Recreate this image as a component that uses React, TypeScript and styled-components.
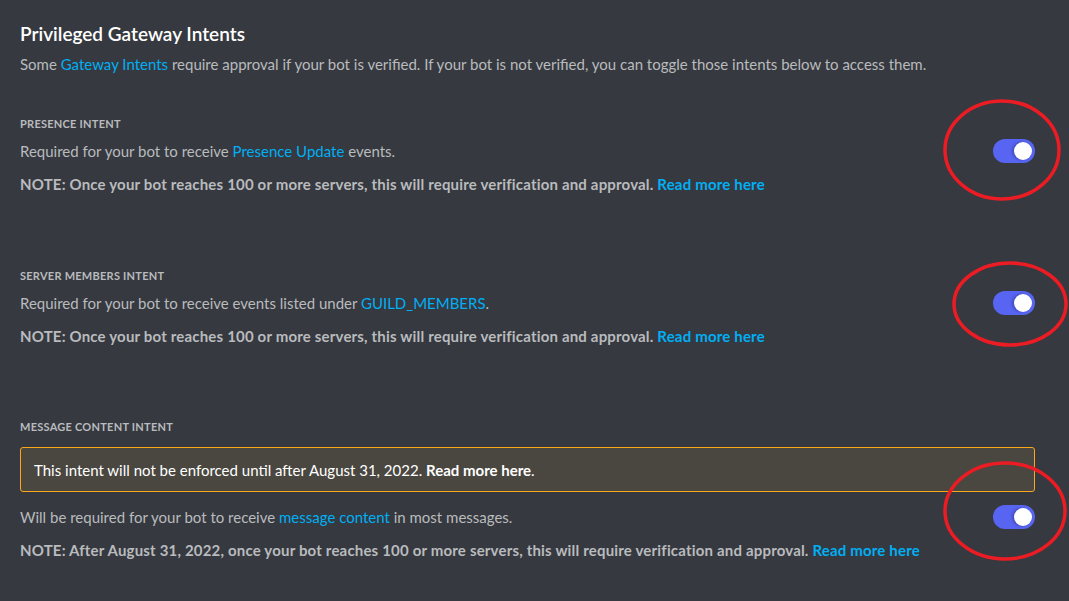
import React from 'react'
import styled, { createGlobalStyle } from 'styled-components'

const GlobalStyle = createGlobalStyle`
    html, body {
        margin: 0;
        padding: 0;
        background: #36393f;
    }
    body {
        font-family: Lato, "Noto Sans", sans-serif;
        -webkit-font-smoothing: antialiased;
    }
`

const Page = styled.div`
    position: relative;
    width: 1069px;
    height: 601px;
    box-sizing: border-box;
    padding: 22px 34px 0 20px;
    background: #36393f;
    overflow: hidden;
`

const Title = styled.div`
    font-size: 19px;
    line-height: 24px;
    font-weight: 600;
    color: #ffffff;
`

const Subtitle = styled.div`
    margin-top: 8px;
    font-size: 15px;
    line-height: 20px;
    color: #b9bbbe;
`

const Link = styled.a`
    color: #00aff4;
    text-decoration: none;
`

const Section = styled.div<{ $top: number }>`
    display: flex;
    flex-direction: column;
    margin-top: ${(p) => p.$top}px;
`

const SectionHeader = styled.div`
    font-size: 11px;
    line-height: 16px;
    font-weight: 700;
    letter-spacing: 0.25px;
    text-transform: uppercase;
    color: #b9bbbe;
`

const Row = styled.div<{ $top: number }>`
    display: flex;
    align-items: center;
    justify-content: space-between;
    height: 24px;
    margin-top: ${(p) => p.$top}px;
`

const Description = styled.div`
    font-size: 15px;
    line-height: 20px;
    color: #b9bbbe;
`

const Note = styled.div`
    margin-top: 11px;
    font-size: 15px;
    line-height: 20px;
    font-weight: 700;
    letter-spacing: 0.18px;
    color: #b9bbbe;
`

const Alert = styled.div`
    margin-top: 12px;
    height: 45px;
    box-sizing: border-box;
    display: flex;
    align-items: center;
    padding: 0 13px;
    border: 1px solid #faa81a;
    border-radius: 3px;
    background: #4a4740;
    font-size: 15px;
    color: #ffffff;

    b {
        font-weight: 700;
    }
`

const Switch = styled.div`
    position: relative;
    width: 42px;
    height: 24px;
    border-radius: 12px;
    background: #5865f2;
    flex-shrink: 0;
`

const Knob = styled.div`
    position: absolute;
    top: 3px;
    right: 3px;
    width: 18px;
    height: 18px;
    border-radius: 50%;
    background: #ffffff;
    box-shadow: -2px 0 3px rgba(30, 30, 90, 0.35);
`

const Annotations = styled.svg`
    position: absolute;
    left: 0;
    top: 0;
    pointer-events: none;
`

const circles = [
    { cx: 1002, cy: 150, rx: 57, ry: 49 },
    { cx: 1010, cy: 304, rx: 56, ry: 41 },
    { cx: 1005, cy: 511, rx: 60, ry: 48 },
]

const Toggle = () => (
    <Switch>
        <Knob />
    </Switch>
)

const ReadMore = () => <Link href="#">Read more here</Link>

const App = () => {
    return (
        <>
            <GlobalStyle />
            <Page>
                <Title>Privileged Gateway Intents</Title>
                <Subtitle>
                    Some <Link href="#">Gateway Intents</Link> require approval if your bot is verified. If your bot is
                    not verified, you can toggle those intents below to access them.
                </Subtitle>

                <Section $top={42}>
                    <SectionHeader>Presence Intent</SectionHeader>
                    <Row $top={7}>
                        <Description>
                            Required for your bot to receive <Link href="#">Presence Update</Link> events.
                        </Description>
                        <Toggle />
                    </Row>
                    <Note>
                        NOTE: Once your bot reaches 100 or more servers, this will require verification and approval.{' '}
                        <ReadMore />
                    </Note>
                </Section>

                <Section $top={74}>
                    <SectionHeader>Server Members Intent</SectionHeader>
                    <Row $top={7}>
                        <Description>
                            Required for your bot to receive events listed under <Link href="#">GUILD_MEMBERS</Link>.
                        </Description>
                        <Toggle />
                    </Row>
                    <Note>
                        NOTE: Once your bot reaches 100 or more servers, this will require verification and approval.{' '}
                        <ReadMore />
                    </Note>
                </Section>

                <Section $top={73}>
                    <SectionHeader>Message Content Intent</SectionHeader>
                    <Alert>
                        <span>
                            This intent will not be enforced until after August 31, 2022. <b>Read more here</b>.
                        </span>
                    </Alert>
                    <Row $top={13}>
                        <Description>
                            Will be required for your bot to receive <Link href="#">message content</Link> in most
                            messages.
                        </Description>
                        <Toggle />
                    </Row>
                    <Note>
                        NOTE: After August 31, 2022, once your bot reaches 100 or more servers, this will require
                        verification and approval. <ReadMore />
                    </Note>
                </Section>

                <Annotations width={1069} height={601} viewBox="0 0 1069 601">
                    {circles.map((c, i) => (
                        <ellipse key={i} {...c} fill="none" stroke="#ec1c24" strokeWidth={3.5} />
                    ))}
                </Annotations>
            </Page>
        </>
    )
}

export default App
